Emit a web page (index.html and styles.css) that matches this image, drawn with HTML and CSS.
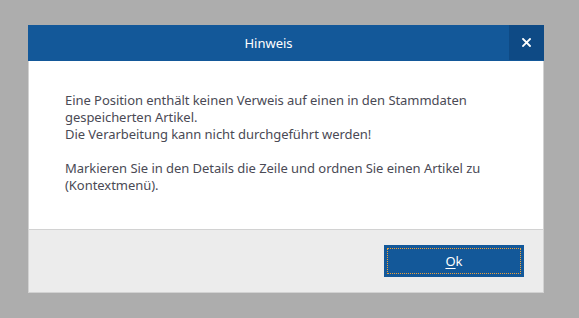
FILE: index.html
```html
<!DOCTYPE html>
<html lang="de">
<head>
<meta charset="utf-8">
<link rel="stylesheet" href="styles.css">
</head>
<body>
<div class="dialog">
  <div class="titlebar">
    <div class="title">Hinweis</div>
    <div class="close">
      <svg width="9" height="9" viewBox="0 0 9 9"><path d="M1 1 L8 8 M8 1 L1 8" stroke="#ffffff" stroke-width="1.8" stroke-linecap="square"/></svg>
    </div>
  </div>
  <div class="content">
    <p class="msg">Eine Position enthält keinen Verweis auf einen in den Stammdaten<br>gespeicherten Artikel.<br>Die Verarbeitung kann nicht durchgeführt werden!<br><br>Markieren Sie in den Details die Zeile und ordnen Sie einen Artikel zu<br>(Kontextmenü).</p>
  </div>
  <div class="footer">
    <button class="ok"><span class="inner"><u>O</u>k</span></button>
  </div>
</div>
</body>
</html>
```
FILE: styles.css
```css
html, body {
  margin: 0;
  padding: 0;
  background: #adadad;
  width: 579px;
  height: 318px;
  overflow: hidden;
}
body {
  padding: 25px 0 0 28px;
  box-sizing: border-box;
  font-family: "Noto Sans", "Open Sans", sans-serif;
  font-size: 13px;
}
.dialog {
  width: 516px;
}
.titlebar {
  display: flex;
  height: 36px;
  background: #135899;
}
.title {
  flex: 1;
  color: #ffffff;
  text-align: center;
  line-height: 36px;
  font-size: 13px;
}
.close {
  width: 35px;
  height: 35px;
  background: #0e4a85;
  display: flex;
  align-items: center;
  justify-content: center;
}
.close svg { display: block; }
.content {
  background: #ffffff;
  border-left: 1px solid #d2d2d2;
  border-right: 1px solid #d2d2d2;
  height: 168px;
  box-sizing: border-box;
  padding: 31px 20px 0 36px;
}
.msg {
  margin: 0;
  color: #4a4a55;
  line-height: 17px;
  letter-spacing: -0.05px;
}
.footer {
  background: #ececec;
  border: 1px solid #d2d2d2;
  height: 64px;
  box-sizing: border-box;
  display: flex;
  justify-content: flex-end;
  align-items: flex-start;
  padding: 15px 19px 0 0;
}
.ok {
  width: 140px;
  height: 32px;
  background: #135899;
  border: none;
  padding: 3px;
  margin: 0;
  box-sizing: border-box;
  font-family: inherit;
  font-size: 13px;
  color: #ffffff;
}
.ok .inner {
  display: flex;
  align-items: center;
  justify-content: center;
  height: 100%;
  border: 1px dotted #f0a23a;
  box-sizing: border-box;
}
.ok u {
  text-underline-offset: 2px;
}
```
